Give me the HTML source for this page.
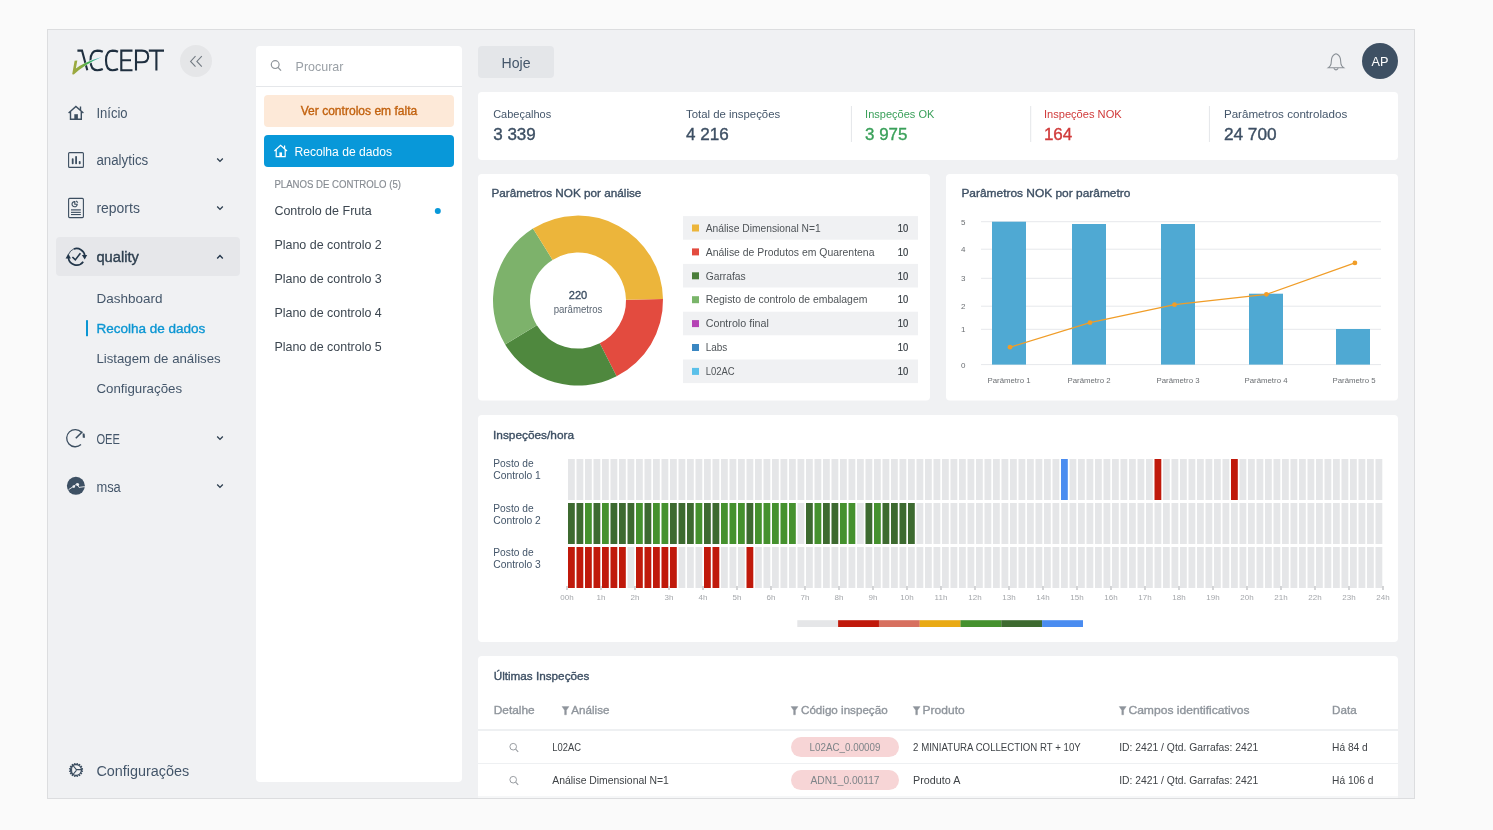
<!DOCTYPE html>
<html><head><meta charset="utf-8"><title>Accept - Recolha de dados</title>
<style>
html,body{margin:0;padding:0;background:#fafafa;width:1493px;height:830px;overflow:hidden}
svg{position:absolute;left:0;top:0;font-family:"Liberation Sans", sans-serif;will-change:transform}
</style></head><body>
<svg width="1493" height="830" viewBox="0 0 1493 830">
<rect x="47.5" y="29.5" width="1367" height="769" fill="#f0f1f3" stroke="#dcdddf" stroke-width="1"/>
<path d="M77.4 50.6 L82 50.6 L87.3 70.3" stroke="#1f2f3f" stroke-width="2.1" fill="none"/>
<path d="M102.8 51.8 Q100.3 50.6 97.3 50.6 Q90.5 50.8 90.5 60.5 Q90.5 70.2 97.3 70.2 Q100.3 70.2 102.8 69" stroke="#1f2f3f" stroke-width="2.1" fill="none"/>
<path d="M118 51.8 Q115.5 50.6 112.5 50.6 Q106 50.8 106 60.5 Q106 70.2 112.5 70.2 Q115.5 70.2 118 69" stroke="#1f2f3f" stroke-width="2.1" fill="none"/>
<path d="M132.5 50.6 L121.3 50.6 L121.3 70.2 L132.5 70.2 M121.3 60.2 L131 60.2" stroke="#1f2f3f" stroke-width="2.1" fill="none"/>
<path d="M136 70.5 L136 50.6 L142 50.6 Q148.2 50.6 148.2 56.4 Q148.2 62.2 142 62.2 L136 62.2" stroke="#1f2f3f" stroke-width="2.1" fill="none"/>
<path d="M148.8 50.6 L164 50.6 M156.4 50.6 L156.4 70.5" stroke="#1f2f3f" stroke-width="2.1" fill="none"/>
<defs><linearGradient id="lg" x1="72" y1="0" x2="102" y2="0" gradientUnits="userSpaceOnUse"><stop offset="0" stop-color="#a0a840"/><stop offset="0.28" stop-color="#8eaa3e"/><stop offset="0.55" stop-color="#3cb050"/><stop offset="1" stop-color="#48b8e8"/></linearGradient></defs>
<path d="M74.2 72.6 Q82 64 101.6 57.2" stroke="#f0f1f3" stroke-width="2.6" fill="none"/>
<path d="M72.2 74.2 L74.6 60.8 L77.3 60.4 L75.9 68.6 Q83 62.6 101.8 57 Q84 64.6 73.8 74.6 Z" stroke="none" stroke-width="1" fill="url(#lg)"/>
<circle cx="196" cy="61" r="16" fill="#e5e6e8" stroke="none" stroke-width="1"/>
<path d="M195.5 56.2 L190.6 61.4 L195.5 66.6 M201.8 56.2 L196.9 61.4 L201.8 66.6" stroke="#737b83" stroke-width="1.1" fill="none"/>
<path d="M68.6 113 L75.9 106.4 L83.4 113 M80.5 106.5 L80.5 110.2 M70.5 111.3 L70.5 119.3 L81.3 119.3 L81.3 111.3" stroke="#3c4e60" stroke-width="1.4" fill="none"/>
<rect x="74.3" y="114.2" width="3.6" height="5.2" fill="#3c4e60"/>
<rect x="68.6" y="152.6" width="14.8" height="14.8" fill="none" rx="1" stroke="#3c4e60" stroke-width="1.1"/>
<rect x="71.8" y="158.2" width="1.8" height="6" fill="#3c4e60" rx="0.8"/>
<rect x="75.2" y="156" width="1.8" height="8.2" fill="#3c4e60" rx="0.8"/>
<rect x="78.8" y="161" width="1.8" height="3.2" fill="#3c4e60" rx="0.8"/>
<rect x="68.6" y="198.4" width="14.8" height="19.2" fill="none" rx="1" stroke="#3c4e60" stroke-width="1.1"/>
<path d="M77.2 204.2 A2.6 2.6 0 1 1 74.8 201.6 L74.8 204.2 Z" stroke="#3c4e60" stroke-width="1.1" fill="none"/>
<path d="M76.2 200.8 L77.8 202.6" stroke="#3c4e60" stroke-width="1.2" fill="none"/>
<rect x="71" y="209.3" width="9.8" height="1.2" fill="#3c4e60"/>
<rect x="71" y="211.8" width="9.8" height="1.1" fill="#3c4e60"/>
<rect x="71" y="214" width="9.8" height="1.1" fill="#3c4e60"/>
<rect x="56" y="237" width="184" height="39" fill="#e6e7ea" rx="4"/>
<path d="M68.71 254.24 A8.3 8.3 0 0 1 73.76 249.00" stroke="#22364a" stroke-width="0.8" fill="none"/>
<path d="M73.76 249.00 A8.3 8.3 0 0 1 84.82 255.64" stroke="#22364a" stroke-width="1.7" fill="none"/>
<path d="M83.23 261.80 A8.3 8.3 0 0 1 68.38 257.96" stroke="#22364a" stroke-width="1.7" fill="none"/>
<path d="M81.9 255 L87.2 255 L84.7 259.6 Z" stroke="none" stroke-width="1" fill="#22364a"/>
<path d="M65.6 258.4 L70.9 258.4 L68.3 253.6 Z" stroke="none" stroke-width="1" fill="#22364a"/>
<path d="M72.4 257 L75.3 259.9 L80.4 253.2" stroke="#22364a" stroke-width="1.6" fill="none"/>
<path d="M81.5 432.2 A8.6 8.6 0 1 0 81 444.6" stroke="#3c4e60" stroke-width="1.3" fill="none"/>
<path d="M75.8 438.2 L82.4 431.8" stroke="#3c4e60" stroke-width="1.6" fill="none"/>
<path d="M82.6 433.2 L84.6 433.8 L85 437.8 L82.8 437.8 Z" stroke="none" stroke-width="1" fill="#3c4e60"/>
<circle cx="75.9" cy="485.8" r="9" fill="#3d5063" stroke="none" stroke-width="1"/>
<path d="M68.6 489.6 L73.6 486.4 L76.8 483.8 L79 487.4 L84.8 486.6" stroke="#f0f1f3" stroke-width="0.9" fill="none"/>
<circle cx="73.8" cy="486.6" r="1.3" fill="#f0f1f3" stroke="none" stroke-width="1"/>
<circle cx="77.6" cy="484.4" r="1.5" fill="#f0f1f3" stroke="none" stroke-width="1"/>
<circle cx="76" cy="770" r="5.5" fill="none" stroke="#3c4e60" stroke-width="1.3"/>
<path d="M81.69 771.13 L82.96 771.39" stroke="#3c4e60" stroke-width="1.5" fill="none"/>
<path d="M80.82 773.22 L81.90 773.94" stroke="#3c4e60" stroke-width="1.5" fill="none"/>
<path d="M79.22 774.82 L79.94 775.90" stroke="#3c4e60" stroke-width="1.5" fill="none"/>
<path d="M77.13 775.69 L77.39 776.96" stroke="#3c4e60" stroke-width="1.5" fill="none"/>
<path d="M74.87 775.69 L74.61 776.96" stroke="#3c4e60" stroke-width="1.5" fill="none"/>
<path d="M72.78 774.82 L72.06 775.90" stroke="#3c4e60" stroke-width="1.5" fill="none"/>
<path d="M71.18 773.22 L70.10 773.94" stroke="#3c4e60" stroke-width="1.5" fill="none"/>
<path d="M70.31 771.13 L69.04 771.39" stroke="#3c4e60" stroke-width="1.5" fill="none"/>
<path d="M70.31 768.87 L69.04 768.61" stroke="#3c4e60" stroke-width="1.5" fill="none"/>
<path d="M71.18 766.78 L70.10 766.06" stroke="#3c4e60" stroke-width="1.5" fill="none"/>
<path d="M72.78 765.18 L72.06 764.10" stroke="#3c4e60" stroke-width="1.5" fill="none"/>
<path d="M74.87 764.31 L74.61 763.04" stroke="#3c4e60" stroke-width="1.5" fill="none"/>
<path d="M77.13 764.31 L77.39 763.04" stroke="#3c4e60" stroke-width="1.5" fill="none"/>
<path d="M79.22 765.18 L79.94 764.10" stroke="#3c4e60" stroke-width="1.5" fill="none"/>
<path d="M80.82 766.78 L81.90 766.06" stroke="#3c4e60" stroke-width="1.5" fill="none"/>
<path d="M81.69 768.87 L82.96 768.61" stroke="#3c4e60" stroke-width="1.5" fill="none"/>
<path d="M72.6 765 Q70.5 770 72.6 775 M72.6 765 L76.4 769.6 L82.6 769.6 M76.4 770.4 L72.6 775" stroke="#3c4e60" stroke-width="1.1" fill="none"/>
<text x="96.4" y="118" font-size="14" fill="#44566a" textLength="31.2" lengthAdjust="spacingAndGlyphs">Início</text>
<text x="96.4" y="165.3" font-size="14" fill="#44566a" textLength="51.8" lengthAdjust="spacingAndGlyphs">analytics</text>
<text x="96.4" y="213.3" font-size="14" fill="#44566a" textLength="43.5" lengthAdjust="spacingAndGlyphs">reports</text>
<text x="96.4" y="261.8" font-size="14" fill="#2f4050" stroke="#2f4050" stroke-width="0.35" textLength="42.5" lengthAdjust="spacingAndGlyphs">quality</text>
<text x="96.4" y="443.8" font-size="14" fill="#44566a" textLength="23.5" lengthAdjust="spacingAndGlyphs">OEE</text>
<text x="96.4" y="491.5" font-size="14" fill="#44566a" textLength="24.4" lengthAdjust="spacingAndGlyphs">msa</text>
<text x="96.4" y="775.8" font-size="14" fill="#44566a" textLength="92.8" lengthAdjust="spacingAndGlyphs">Configurações</text>
<path d="M217.2 158.6 L220 161.39999999999998 L222.8 158.6" stroke="#2c3d4e" stroke-width="1.35" fill="none"/>
<path d="M217.2 206.6 L220 209.39999999999998 L222.8 206.6" stroke="#2c3d4e" stroke-width="1.35" fill="none"/>
<path d="M217.2 484.59999999999997 L220 487.4 L222.8 484.59999999999997" stroke="#2c3d4e" stroke-width="1.35" fill="none"/>
<path d="M217.2 436.59999999999997 L220 439.4 L222.8 436.59999999999997" stroke="#2c3d4e" stroke-width="1.35" fill="none"/>
<path d="M217.2 258.4 L220 255.6 L222.8 258.4" stroke="#22354a" stroke-width="1.4" fill="none"/>
<text x="96.4" y="303.1" font-size="13" fill="#44566a" textLength="66" lengthAdjust="spacingAndGlyphs">Dashboard</text>
<text x="96.4" y="332.9" font-size="13" fill="#0b96d3" stroke="#0b96d3" stroke-width="0.35" textLength="108.9" lengthAdjust="spacingAndGlyphs">Recolha de dados</text>
<rect x="86" y="320.2" width="2" height="16" fill="#0b96d3"/>
<text x="96.4" y="363" font-size="13" fill="#44566a" textLength="124.3" lengthAdjust="spacingAndGlyphs">Listagem de análises</text>
<text x="96.4" y="393" font-size="13" fill="#44566a" textLength="85.7" lengthAdjust="spacingAndGlyphs">Configurações</text>
<rect x="256" y="46" width="206" height="736" fill="#ffffff" rx="4"/>
<circle cx="275.2" cy="64.6" r="3.9" fill="none" stroke="#8f959b" stroke-width="1.2"/>
<path d="M278 67.4 L281 70.6" stroke="#8f959b" stroke-width="1.3" fill="none"/>
<text x="295.6" y="70.8" font-size="13" fill="#9aa0a6" textLength="47.8" lengthAdjust="spacingAndGlyphs">Procurar</text>
<rect x="256" y="86" width="206" height="1" fill="#e5e7ea"/>
<rect x="264" y="95" width="190" height="32" fill="#fde9d8" rx="4"/>
<text x="359" y="114.8" font-size="12" fill="#c2620f" stroke="#c2620f" stroke-width="0.35" text-anchor="middle" textLength="116.6" lengthAdjust="spacingAndGlyphs">Ver controlos em falta</text>
<rect x="264" y="135" width="190" height="32" fill="#0898d9" rx="4"/>
<path d="M274.4 151 L280.6 145.4 L287 151 M284.6 145.4 L284.6 148.6 M276.2 149.8 L276.2 156.6 L285.2 156.6 L285.2 149.8" stroke="#ffffff" stroke-width="1.2" fill="none"/>
<rect x="279.4" y="152.4" width="2.6" height="4.2" fill="#ffffff"/>
<text x="294.4" y="156" font-size="12.5" fill="#ffffff" textLength="97.7" lengthAdjust="spacingAndGlyphs">Recolha de dados</text>
<text x="274.4" y="187.9" font-size="10" fill="#868b92" textLength="126.6" lengthAdjust="spacingAndGlyphs" stroke="#868b92" stroke-width="0.15">PLANOS DE CONTROLO (5)</text>
<text x="274.4" y="215" font-size="13" fill="#3d4751" textLength="97.3" lengthAdjust="spacingAndGlyphs">Controlo de Fruta</text>
<text x="274.4" y="249.2" font-size="13" fill="#3d4751" textLength="107.4" lengthAdjust="spacingAndGlyphs">Plano de controlo 2</text>
<text x="274.4" y="283.2" font-size="13" fill="#3d4751" textLength="107.4" lengthAdjust="spacingAndGlyphs">Plano de controlo 3</text>
<text x="274.4" y="317.2" font-size="13" fill="#3d4751" textLength="107.4" lengthAdjust="spacingAndGlyphs">Plano de controlo 4</text>
<text x="274.4" y="351.2" font-size="13" fill="#3d4751" textLength="107.4" lengthAdjust="spacingAndGlyphs">Plano de controlo 5</text>
<circle cx="437.8" cy="211" r="3" fill="#0898d9" stroke="none" stroke-width="1"/>
<rect x="478" y="46" width="76" height="32" fill="#e4e6e9" rx="4"/>
<text x="516" y="67.9" font-size="14" fill="#44566a" text-anchor="middle" textLength="29" lengthAdjust="spacingAndGlyphs">Hoje</text>
<path d="M1336 53.8 Q1339.6 55 1340.4 58.8 L1341 64.2 Q1341.4 66.4 1343.6 67.8 L1328.4 67.8 Q1330.6 66.4 1331 64.2 L1331.6 58.8 Q1332.4 55 1336 53.8 Z" stroke="#8a9096" stroke-width="1.1" fill="none"/>
<path d="M1333.8 68.2 Q1336 71.6 1338.2 68.2" stroke="#8a9096" stroke-width="1.1" fill="none"/>
<circle cx="1380" cy="61" r="18" fill="#3e5063" stroke="none" stroke-width="1"/>
<text x="1380" y="66" font-size="13.5" fill="#ffffff" text-anchor="middle" textLength="16.9" lengthAdjust="spacingAndGlyphs">AP</text>
<rect x="478" y="92" width="920" height="68" fill="#ffffff" rx="4"/>
<text x="493.2" y="117.9" font-size="11.5" fill="#44566a" textLength="58" lengthAdjust="spacingAndGlyphs">Cabeçalhos</text>
<text x="493.2" y="140.3" font-size="16" fill="#3d4f63" stroke="#3d4f63" stroke-width="0.35" textLength="42.6" lengthAdjust="spacingAndGlyphs">3 339</text>
<text x="686" y="117.9" font-size="11.5" fill="#44566a" textLength="94.2" lengthAdjust="spacingAndGlyphs">Total de inspeções</text>
<text x="686" y="140.3" font-size="16" fill="#3d4f63" stroke="#3d4f63" stroke-width="0.35" textLength="42.7" lengthAdjust="spacingAndGlyphs">4 216</text>
<text x="865.1" y="117.9" font-size="11.5" fill="#3aa05a" textLength="69.2" lengthAdjust="spacingAndGlyphs">Inspeções OK</text>
<text x="865.1" y="140.3" font-size="16" fill="#3aa05a" stroke="#3aa05a" stroke-width="0.35" textLength="42.3" lengthAdjust="spacingAndGlyphs">3 975</text>
<text x="1043.9" y="117.9" font-size="11.5" fill="#d03a3a" textLength="77.8" lengthAdjust="spacingAndGlyphs">Inspeções NOK</text>
<text x="1043.9" y="140.3" font-size="16" fill="#d03a3a" stroke="#d03a3a" stroke-width="0.35" textLength="28.4" lengthAdjust="spacingAndGlyphs">164</text>
<text x="1223.9" y="117.9" font-size="11.5" fill="#44566a" textLength="123.3" lengthAdjust="spacingAndGlyphs">Parâmetros controlados</text>
<text x="1223.9" y="140.3" font-size="16" fill="#3d4f63" stroke="#3d4f63" stroke-width="0.35" textLength="52.7" lengthAdjust="spacingAndGlyphs">24 700</text>
<rect x="850.9" y="106" width="1" height="36" fill="#e4e6e9"/>
<rect x="1030.2" y="106" width="1" height="36" fill="#e4e6e9"/>
<rect x="1208.9" y="106" width="1" height="36" fill="#e4e6e9"/>
<rect x="478" y="174" width="452" height="226.5" fill="#ffffff" rx="4"/>
<text x="491.4" y="197" font-size="11.5" fill="#3d4f63" stroke="#3d4f63" stroke-width="0.35" textLength="150" lengthAdjust="spacingAndGlyphs">Parâmetros NOK por análise</text>
<path d="M662.99 299.12 A85 85 0 0 1 616.59 376.34 L599.79 343.37 A48 48 0 0 0 625.99 299.76 Z" stroke="none" stroke-width="1" fill="#e34b3f"/>
<path d="M616.59 376.34 A85 85 0 0 1 505.14 344.38 L536.86 325.32 A48 48 0 0 0 599.79 343.37 Z" stroke="none" stroke-width="1" fill="#4f883e"/>
<path d="M505.14 344.38 A85 85 0 0 1 532.96 228.52 L552.56 259.89 A48 48 0 0 0 536.86 325.32 Z" stroke="none" stroke-width="1" fill="#7db26b"/>
<path d="M532.96 228.52 A85 85 0 0 1 662.99 299.12 L625.99 299.76 A48 48 0 0 0 552.56 259.89 Z" stroke="none" stroke-width="1" fill="#ecb53b"/>
<text x="578" y="299.4" font-size="11.5" fill="#3d4f63" stroke="#3d4f63" stroke-width="0.35" text-anchor="middle" textLength="18.5" lengthAdjust="spacingAndGlyphs">220</text>
<text x="578" y="313" font-size="10" fill="#5b6673" text-anchor="middle" textLength="48.7" lengthAdjust="spacingAndGlyphs">parâmetros</text>
<rect x="683" y="216.1" width="235" height="23.6" fill="#f0f1f3"/>
<rect x="692" y="224.5" width="7" height="7" fill="#ecb53b"/>
<text x="705.7" y="231.7" font-size="11" fill="#4f5458" textLength="115" lengthAdjust="spacingAndGlyphs">Análise Dimensional N=1</text>
<text x="908.3" y="231.7" font-size="11" fill="#333a40" text-anchor="end" textLength="10.5" lengthAdjust="spacingAndGlyphs" stroke="#333a40" stroke-width="0.2">10</text>
<rect x="692" y="248.4" width="7" height="7" fill="#e34b3f"/>
<text x="705.7" y="255.6" font-size="11" fill="#4f5458" textLength="168.8" lengthAdjust="spacingAndGlyphs">Análise de Produtos em Quarentena</text>
<text x="908.3" y="255.6" font-size="11" fill="#333a40" text-anchor="end" textLength="10.5" lengthAdjust="spacingAndGlyphs" stroke="#333a40" stroke-width="0.2">10</text>
<rect x="683" y="263.9" width="235" height="23.6" fill="#f0f1f3"/>
<rect x="692" y="272.29999999999995" width="7" height="7" fill="#4a7e3a"/>
<text x="705.7" y="279.5" font-size="11" fill="#4f5458" textLength="40" lengthAdjust="spacingAndGlyphs">Garrafas</text>
<text x="908.3" y="279.5" font-size="11" fill="#333a40" text-anchor="end" textLength="10.5" lengthAdjust="spacingAndGlyphs" stroke="#333a40" stroke-width="0.2">10</text>
<rect x="692" y="296.19999999999993" width="7" height="7" fill="#7ab56a"/>
<text x="705.7" y="303.4" font-size="11" fill="#4f5458" textLength="161.7" lengthAdjust="spacingAndGlyphs">Registo de controlo de embalagem</text>
<text x="908.3" y="303.4" font-size="11" fill="#333a40" text-anchor="end" textLength="10.5" lengthAdjust="spacingAndGlyphs" stroke="#333a40" stroke-width="0.2">10</text>
<rect x="683" y="311.7" width="235" height="23.6" fill="#f0f1f3"/>
<rect x="692" y="320.09999999999997" width="7" height="7" fill="#b543b5"/>
<text x="705.7" y="327.3" font-size="11" fill="#4f5458" textLength="63.2" lengthAdjust="spacingAndGlyphs">Controlo final</text>
<text x="908.3" y="327.3" font-size="11" fill="#333a40" text-anchor="end" textLength="10.5" lengthAdjust="spacingAndGlyphs" stroke="#333a40" stroke-width="0.2">10</text>
<rect x="692" y="344.0" width="7" height="7" fill="#3a87c2"/>
<text x="705.7" y="351.20000000000005" font-size="11" fill="#4f5458" textLength="21.6" lengthAdjust="spacingAndGlyphs">Labs</text>
<text x="908.3" y="351.20000000000005" font-size="11" fill="#333a40" text-anchor="end" textLength="10.5" lengthAdjust="spacingAndGlyphs" stroke="#333a40" stroke-width="0.2">10</text>
<rect x="683" y="359.5" width="235" height="23.6" fill="#f0f1f3"/>
<rect x="692" y="367.9" width="7" height="7" fill="#5bc0e9"/>
<text x="705.7" y="375.1" font-size="11" fill="#4f5458" textLength="29" lengthAdjust="spacingAndGlyphs">L02AC</text>
<text x="908.3" y="375.1" font-size="11" fill="#333a40" text-anchor="end" textLength="10.5" lengthAdjust="spacingAndGlyphs" stroke="#333a40" stroke-width="0.2">10</text>
<rect x="946" y="174" width="452" height="226.5" fill="#ffffff" rx="4"/>
<text x="961.4" y="197" font-size="11.5" fill="#3d4f63" stroke="#3d4f63" stroke-width="0.35" textLength="169" lengthAdjust="spacingAndGlyphs">Parâmetros NOK por parâmetro</text>
<rect x="981" y="221.2" width="400" height="1" fill="#e6e8eb"/>
<text x="963.2" y="224.7" font-size="8" fill="#6b6f73" text-anchor="middle">5</text>
<rect x="981" y="248.7" width="400" height="1" fill="#e6e8eb"/>
<text x="963.2" y="252.2" font-size="8" fill="#6b6f73" text-anchor="middle">4</text>
<rect x="981" y="277.8" width="400" height="1" fill="#e6e8eb"/>
<text x="963.2" y="281.3" font-size="8" fill="#6b6f73" text-anchor="middle">3</text>
<rect x="981" y="305.7" width="400" height="1" fill="#e6e8eb"/>
<text x="963.2" y="309.2" font-size="8" fill="#6b6f73" text-anchor="middle">2</text>
<rect x="981" y="328.8" width="400" height="1" fill="#e6e8eb"/>
<text x="963.2" y="332.3" font-size="8" fill="#6b6f73" text-anchor="middle">1</text>
<rect x="981" y="364.1" width="400" height="1" fill="#e6e8eb"/>
<text x="963.2" y="367.6" font-size="8" fill="#6b6f73" text-anchor="middle">0</text>
<rect x="992" y="221.7" width="34" height="142.90000000000003" fill="#4fa9d3"/>
<rect x="1072" y="224" width="34" height="140.60000000000002" fill="#4fa9d3"/>
<rect x="1161" y="224" width="34" height="140.60000000000002" fill="#4fa9d3"/>
<rect x="1249" y="293.7" width="34" height="70.90000000000003" fill="#4fa9d3"/>
<rect x="1336" y="329" width="34" height="35.60000000000002" fill="#4fa9d3"/>
<path d="M1010 347.2 L1090 322.7 L1174.5 304.7 L1266.4 294.3 L1354.9 262.9" stroke="#f09d28" stroke-width="1.2" fill="none"/>
<circle cx="1010" cy="347.2" r="2.4" fill="#f09d28" stroke="none" stroke-width="1"/>
<circle cx="1090" cy="322.7" r="2.4" fill="#f09d28" stroke="none" stroke-width="1"/>
<circle cx="1174.5" cy="304.7" r="2.4" fill="#f09d28" stroke="none" stroke-width="1"/>
<circle cx="1266.4" cy="294.3" r="2.4" fill="#f09d28" stroke="none" stroke-width="1"/>
<circle cx="1354.9" cy="262.9" r="2.4" fill="#f09d28" stroke="none" stroke-width="1"/>
<text x="1009" y="383.2" font-size="8" fill="#6b6f73" text-anchor="middle" textLength="43" lengthAdjust="spacingAndGlyphs">Parâmetro 1</text>
<text x="1089" y="383.2" font-size="8" fill="#6b6f73" text-anchor="middle" textLength="43" lengthAdjust="spacingAndGlyphs">Parâmetro 2</text>
<text x="1178" y="383.2" font-size="8" fill="#6b6f73" text-anchor="middle" textLength="43" lengthAdjust="spacingAndGlyphs">Parâmetro 3</text>
<text x="1266" y="383.2" font-size="8" fill="#6b6f73" text-anchor="middle" textLength="43" lengthAdjust="spacingAndGlyphs">Parâmetro 4</text>
<text x="1354" y="383.2" font-size="8" fill="#6b6f73" text-anchor="middle" textLength="43" lengthAdjust="spacingAndGlyphs">Parâmetro 5</text>
<rect x="478" y="415" width="920" height="227" fill="#ffffff" rx="4"/>
<text x="493" y="439" font-size="11.5" fill="#3d4f63" stroke="#3d4f63" stroke-width="0.35" textLength="81" lengthAdjust="spacingAndGlyphs">Inspeções/hora</text>
<text x="493.3" y="467.2" font-size="11" fill="#44566a" textLength="40.3" lengthAdjust="spacingAndGlyphs">Posto de</text>
<text x="493.3" y="478.9" font-size="11" fill="#44566a" textLength="47.5" lengthAdjust="spacingAndGlyphs">Controlo 1</text>
<text x="493.3" y="512.1" font-size="11" fill="#44566a" textLength="40.3" lengthAdjust="spacingAndGlyphs">Posto de</text>
<text x="493.3" y="524" font-size="11" fill="#44566a" textLength="47.5" lengthAdjust="spacingAndGlyphs">Controlo 2</text>
<text x="493.3" y="556.3" font-size="11" fill="#44566a" textLength="40.3" lengthAdjust="spacingAndGlyphs">Posto de</text>
<text x="493.3" y="568" font-size="11" fill="#44566a" textLength="47.5" lengthAdjust="spacingAndGlyphs">Controlo 3</text>
<rect x="568.00" y="459" width="6.8" height="41" fill="#e5e6e8"/>
<rect x="576.50" y="459" width="6.8" height="41" fill="#e5e6e8"/>
<rect x="585.00" y="459" width="6.8" height="41" fill="#e5e6e8"/>
<rect x="593.50" y="459" width="6.8" height="41" fill="#e5e6e8"/>
<rect x="602.00" y="459" width="6.8" height="41" fill="#e5e6e8"/>
<rect x="610.50" y="459" width="6.8" height="41" fill="#e5e6e8"/>
<rect x="619.00" y="459" width="6.8" height="41" fill="#e5e6e8"/>
<rect x="627.50" y="459" width="6.8" height="41" fill="#e5e6e8"/>
<rect x="636.00" y="459" width="6.8" height="41" fill="#e5e6e8"/>
<rect x="644.50" y="459" width="6.8" height="41" fill="#e5e6e8"/>
<rect x="653.00" y="459" width="6.8" height="41" fill="#e5e6e8"/>
<rect x="661.50" y="459" width="6.8" height="41" fill="#e5e6e8"/>
<rect x="670.00" y="459" width="6.8" height="41" fill="#e5e6e8"/>
<rect x="678.50" y="459" width="6.8" height="41" fill="#e5e6e8"/>
<rect x="687.00" y="459" width="6.8" height="41" fill="#e5e6e8"/>
<rect x="695.50" y="459" width="6.8" height="41" fill="#e5e6e8"/>
<rect x="704.00" y="459" width="6.8" height="41" fill="#e5e6e8"/>
<rect x="712.50" y="459" width="6.8" height="41" fill="#e5e6e8"/>
<rect x="721.00" y="459" width="6.8" height="41" fill="#e5e6e8"/>
<rect x="729.50" y="459" width="6.8" height="41" fill="#e5e6e8"/>
<rect x="738.00" y="459" width="6.8" height="41" fill="#e5e6e8"/>
<rect x="746.50" y="459" width="6.8" height="41" fill="#e5e6e8"/>
<rect x="755.00" y="459" width="6.8" height="41" fill="#e5e6e8"/>
<rect x="763.50" y="459" width="6.8" height="41" fill="#e5e6e8"/>
<rect x="772.00" y="459" width="6.8" height="41" fill="#e5e6e8"/>
<rect x="780.50" y="459" width="6.8" height="41" fill="#e5e6e8"/>
<rect x="789.00" y="459" width="6.8" height="41" fill="#e5e6e8"/>
<rect x="797.50" y="459" width="6.8" height="41" fill="#e5e6e8"/>
<rect x="806.00" y="459" width="6.8" height="41" fill="#e5e6e8"/>
<rect x="814.50" y="459" width="6.8" height="41" fill="#e5e6e8"/>
<rect x="823.00" y="459" width="6.8" height="41" fill="#e5e6e8"/>
<rect x="831.50" y="459" width="6.8" height="41" fill="#e5e6e8"/>
<rect x="840.00" y="459" width="6.8" height="41" fill="#e5e6e8"/>
<rect x="848.50" y="459" width="6.8" height="41" fill="#e5e6e8"/>
<rect x="857.00" y="459" width="6.8" height="41" fill="#e5e6e8"/>
<rect x="865.50" y="459" width="6.8" height="41" fill="#e5e6e8"/>
<rect x="874.00" y="459" width="6.8" height="41" fill="#e5e6e8"/>
<rect x="882.50" y="459" width="6.8" height="41" fill="#e5e6e8"/>
<rect x="891.00" y="459" width="6.8" height="41" fill="#e5e6e8"/>
<rect x="899.50" y="459" width="6.8" height="41" fill="#e5e6e8"/>
<rect x="908.00" y="459" width="6.8" height="41" fill="#e5e6e8"/>
<rect x="916.50" y="459" width="6.8" height="41" fill="#e5e6e8"/>
<rect x="925.00" y="459" width="6.8" height="41" fill="#e5e6e8"/>
<rect x="933.50" y="459" width="6.8" height="41" fill="#e5e6e8"/>
<rect x="942.00" y="459" width="6.8" height="41" fill="#e5e6e8"/>
<rect x="950.50" y="459" width="6.8" height="41" fill="#e5e6e8"/>
<rect x="959.00" y="459" width="6.8" height="41" fill="#e5e6e8"/>
<rect x="967.50" y="459" width="6.8" height="41" fill="#e5e6e8"/>
<rect x="976.00" y="459" width="6.8" height="41" fill="#e5e6e8"/>
<rect x="984.50" y="459" width="6.8" height="41" fill="#e5e6e8"/>
<rect x="993.00" y="459" width="6.8" height="41" fill="#e5e6e8"/>
<rect x="1001.50" y="459" width="6.8" height="41" fill="#e5e6e8"/>
<rect x="1010.00" y="459" width="6.8" height="41" fill="#e5e6e8"/>
<rect x="1018.50" y="459" width="6.8" height="41" fill="#e5e6e8"/>
<rect x="1027.00" y="459" width="6.8" height="41" fill="#e5e6e8"/>
<rect x="1035.50" y="459" width="6.8" height="41" fill="#e5e6e8"/>
<rect x="1044.00" y="459" width="6.8" height="41" fill="#e5e6e8"/>
<rect x="1052.50" y="459" width="6.8" height="41" fill="#e5e6e8"/>
<rect x="1061.00" y="459" width="6.8" height="41" fill="#4a8cf0"/>
<rect x="1069.50" y="459" width="6.8" height="41" fill="#e5e6e8"/>
<rect x="1078.00" y="459" width="6.8" height="41" fill="#e5e6e8"/>
<rect x="1086.50" y="459" width="6.8" height="41" fill="#e5e6e8"/>
<rect x="1095.00" y="459" width="6.8" height="41" fill="#e5e6e8"/>
<rect x="1103.50" y="459" width="6.8" height="41" fill="#e5e6e8"/>
<rect x="1112.00" y="459" width="6.8" height="41" fill="#e5e6e8"/>
<rect x="1120.50" y="459" width="6.8" height="41" fill="#e5e6e8"/>
<rect x="1129.00" y="459" width="6.8" height="41" fill="#e5e6e8"/>
<rect x="1137.50" y="459" width="6.8" height="41" fill="#e5e6e8"/>
<rect x="1146.00" y="459" width="6.8" height="41" fill="#e5e6e8"/>
<rect x="1154.50" y="459" width="6.8" height="41" fill="#c0190b"/>
<rect x="1163.00" y="459" width="6.8" height="41" fill="#e5e6e8"/>
<rect x="1171.50" y="459" width="6.8" height="41" fill="#e5e6e8"/>
<rect x="1180.00" y="459" width="6.8" height="41" fill="#e5e6e8"/>
<rect x="1188.50" y="459" width="6.8" height="41" fill="#e5e6e8"/>
<rect x="1197.00" y="459" width="6.8" height="41" fill="#e5e6e8"/>
<rect x="1205.50" y="459" width="6.8" height="41" fill="#e5e6e8"/>
<rect x="1214.00" y="459" width="6.8" height="41" fill="#e5e6e8"/>
<rect x="1222.50" y="459" width="6.8" height="41" fill="#e5e6e8"/>
<rect x="1231.00" y="459" width="6.8" height="41" fill="#c0190b"/>
<rect x="1239.50" y="459" width="6.8" height="41" fill="#e5e6e8"/>
<rect x="1248.00" y="459" width="6.8" height="41" fill="#e5e6e8"/>
<rect x="1256.50" y="459" width="6.8" height="41" fill="#e5e6e8"/>
<rect x="1265.00" y="459" width="6.8" height="41" fill="#e5e6e8"/>
<rect x="1273.50" y="459" width="6.8" height="41" fill="#e5e6e8"/>
<rect x="1282.00" y="459" width="6.8" height="41" fill="#e5e6e8"/>
<rect x="1290.50" y="459" width="6.8" height="41" fill="#e5e6e8"/>
<rect x="1299.00" y="459" width="6.8" height="41" fill="#e5e6e8"/>
<rect x="1307.50" y="459" width="6.8" height="41" fill="#e5e6e8"/>
<rect x="1316.00" y="459" width="6.8" height="41" fill="#e5e6e8"/>
<rect x="1324.50" y="459" width="6.8" height="41" fill="#e5e6e8"/>
<rect x="1333.00" y="459" width="6.8" height="41" fill="#e5e6e8"/>
<rect x="1341.50" y="459" width="6.8" height="41" fill="#e5e6e8"/>
<rect x="1350.00" y="459" width="6.8" height="41" fill="#e5e6e8"/>
<rect x="1358.50" y="459" width="6.8" height="41" fill="#e5e6e8"/>
<rect x="1367.00" y="459" width="6.8" height="41" fill="#e5e6e8"/>
<rect x="1375.50" y="459" width="6.8" height="41" fill="#e5e6e8"/>
<rect x="568.00" y="503" width="6.8" height="41" fill="#3d6a30"/>
<rect x="576.50" y="503" width="6.8" height="41" fill="#3d6a30"/>
<rect x="585.00" y="503" width="6.8" height="41" fill="#45912e"/>
<rect x="593.50" y="503" width="6.8" height="41" fill="#3d6a30"/>
<rect x="602.00" y="503" width="6.8" height="41" fill="#45912e"/>
<rect x="610.50" y="503" width="6.8" height="41" fill="#3d6a30"/>
<rect x="619.00" y="503" width="6.8" height="41" fill="#3d6a30"/>
<rect x="627.50" y="503" width="6.8" height="41" fill="#3d6a30"/>
<rect x="636.00" y="503" width="6.8" height="41" fill="#45912e"/>
<rect x="644.50" y="503" width="6.8" height="41" fill="#3d6a30"/>
<rect x="653.00" y="503" width="6.8" height="41" fill="#45912e"/>
<rect x="661.50" y="503" width="6.8" height="41" fill="#45912e"/>
<rect x="670.00" y="503" width="6.8" height="41" fill="#3d6a30"/>
<rect x="678.50" y="503" width="6.8" height="41" fill="#3d6a30"/>
<rect x="687.00" y="503" width="6.8" height="41" fill="#3d6a30"/>
<rect x="695.50" y="503" width="6.8" height="41" fill="#45912e"/>
<rect x="704.00" y="503" width="6.8" height="41" fill="#3d6a30"/>
<rect x="712.50" y="503" width="6.8" height="41" fill="#3d6a30"/>
<rect x="721.00" y="503" width="6.8" height="41" fill="#45912e"/>
<rect x="729.50" y="503" width="6.8" height="41" fill="#45912e"/>
<rect x="738.00" y="503" width="6.8" height="41" fill="#45912e"/>
<rect x="746.50" y="503" width="6.8" height="41" fill="#3d6a30"/>
<rect x="755.00" y="503" width="6.8" height="41" fill="#45912e"/>
<rect x="763.50" y="503" width="6.8" height="41" fill="#45912e"/>
<rect x="772.00" y="503" width="6.8" height="41" fill="#45912e"/>
<rect x="780.50" y="503" width="6.8" height="41" fill="#45912e"/>
<rect x="789.00" y="503" width="6.8" height="41" fill="#45912e"/>
<rect x="797.50" y="503" width="6.8" height="41" fill="#e5e6e8"/>
<rect x="806.00" y="503" width="6.8" height="41" fill="#3d6a30"/>
<rect x="814.50" y="503" width="6.8" height="41" fill="#45912e"/>
<rect x="823.00" y="503" width="6.8" height="41" fill="#3d6a30"/>
<rect x="831.50" y="503" width="6.8" height="41" fill="#3d6a30"/>
<rect x="840.00" y="503" width="6.8" height="41" fill="#45912e"/>
<rect x="848.50" y="503" width="6.8" height="41" fill="#45912e"/>
<rect x="857.00" y="503" width="6.8" height="41" fill="#e5e6e8"/>
<rect x="865.50" y="503" width="6.8" height="41" fill="#3d6a30"/>
<rect x="874.00" y="503" width="6.8" height="41" fill="#45912e"/>
<rect x="882.50" y="503" width="6.8" height="41" fill="#3d6a30"/>
<rect x="891.00" y="503" width="6.8" height="41" fill="#3d6a30"/>
<rect x="899.50" y="503" width="6.8" height="41" fill="#3d6a30"/>
<rect x="908.00" y="503" width="6.8" height="41" fill="#3d6a30"/>
<rect x="916.50" y="503" width="6.8" height="41" fill="#e5e6e8"/>
<rect x="925.00" y="503" width="6.8" height="41" fill="#e5e6e8"/>
<rect x="933.50" y="503" width="6.8" height="41" fill="#e5e6e8"/>
<rect x="942.00" y="503" width="6.8" height="41" fill="#e5e6e8"/>
<rect x="950.50" y="503" width="6.8" height="41" fill="#e5e6e8"/>
<rect x="959.00" y="503" width="6.8" height="41" fill="#e5e6e8"/>
<rect x="967.50" y="503" width="6.8" height="41" fill="#e5e6e8"/>
<rect x="976.00" y="503" width="6.8" height="41" fill="#e5e6e8"/>
<rect x="984.50" y="503" width="6.8" height="41" fill="#e5e6e8"/>
<rect x="993.00" y="503" width="6.8" height="41" fill="#e5e6e8"/>
<rect x="1001.50" y="503" width="6.8" height="41" fill="#e5e6e8"/>
<rect x="1010.00" y="503" width="6.8" height="41" fill="#e5e6e8"/>
<rect x="1018.50" y="503" width="6.8" height="41" fill="#e5e6e8"/>
<rect x="1027.00" y="503" width="6.8" height="41" fill="#e5e6e8"/>
<rect x="1035.50" y="503" width="6.8" height="41" fill="#e5e6e8"/>
<rect x="1044.00" y="503" width="6.8" height="41" fill="#e5e6e8"/>
<rect x="1052.50" y="503" width="6.8" height="41" fill="#e5e6e8"/>
<rect x="1061.00" y="503" width="6.8" height="41" fill="#e5e6e8"/>
<rect x="1069.50" y="503" width="6.8" height="41" fill="#e5e6e8"/>
<rect x="1078.00" y="503" width="6.8" height="41" fill="#e5e6e8"/>
<rect x="1086.50" y="503" width="6.8" height="41" fill="#e5e6e8"/>
<rect x="1095.00" y="503" width="6.8" height="41" fill="#e5e6e8"/>
<rect x="1103.50" y="503" width="6.8" height="41" fill="#e5e6e8"/>
<rect x="1112.00" y="503" width="6.8" height="41" fill="#e5e6e8"/>
<rect x="1120.50" y="503" width="6.8" height="41" fill="#e5e6e8"/>
<rect x="1129.00" y="503" width="6.8" height="41" fill="#e5e6e8"/>
<rect x="1137.50" y="503" width="6.8" height="41" fill="#e5e6e8"/>
<rect x="1146.00" y="503" width="6.8" height="41" fill="#e5e6e8"/>
<rect x="1154.50" y="503" width="6.8" height="41" fill="#e5e6e8"/>
<rect x="1163.00" y="503" width="6.8" height="41" fill="#e5e6e8"/>
<rect x="1171.50" y="503" width="6.8" height="41" fill="#e5e6e8"/>
<rect x="1180.00" y="503" width="6.8" height="41" fill="#e5e6e8"/>
<rect x="1188.50" y="503" width="6.8" height="41" fill="#e5e6e8"/>
<rect x="1197.00" y="503" width="6.8" height="41" fill="#e5e6e8"/>
<rect x="1205.50" y="503" width="6.8" height="41" fill="#e5e6e8"/>
<rect x="1214.00" y="503" width="6.8" height="41" fill="#e5e6e8"/>
<rect x="1222.50" y="503" width="6.8" height="41" fill="#e5e6e8"/>
<rect x="1231.00" y="503" width="6.8" height="41" fill="#e5e6e8"/>
<rect x="1239.50" y="503" width="6.8" height="41" fill="#e5e6e8"/>
<rect x="1248.00" y="503" width="6.8" height="41" fill="#e5e6e8"/>
<rect x="1256.50" y="503" width="6.8" height="41" fill="#e5e6e8"/>
<rect x="1265.00" y="503" width="6.8" height="41" fill="#e5e6e8"/>
<rect x="1273.50" y="503" width="6.8" height="41" fill="#e5e6e8"/>
<rect x="1282.00" y="503" width="6.8" height="41" fill="#e5e6e8"/>
<rect x="1290.50" y="503" width="6.8" height="41" fill="#e5e6e8"/>
<rect x="1299.00" y="503" width="6.8" height="41" fill="#e5e6e8"/>
<rect x="1307.50" y="503" width="6.8" height="41" fill="#e5e6e8"/>
<rect x="1316.00" y="503" width="6.8" height="41" fill="#e5e6e8"/>
<rect x="1324.50" y="503" width="6.8" height="41" fill="#e5e6e8"/>
<rect x="1333.00" y="503" width="6.8" height="41" fill="#e5e6e8"/>
<rect x="1341.50" y="503" width="6.8" height="41" fill="#e5e6e8"/>
<rect x="1350.00" y="503" width="6.8" height="41" fill="#e5e6e8"/>
<rect x="1358.50" y="503" width="6.8" height="41" fill="#e5e6e8"/>
<rect x="1367.00" y="503" width="6.8" height="41" fill="#e5e6e8"/>
<rect x="1375.50" y="503" width="6.8" height="41" fill="#e5e6e8"/>
<rect x="568.00" y="547" width="6.8" height="41" fill="#c0190b"/>
<rect x="576.50" y="547" width="6.8" height="41" fill="#c0190b"/>
<rect x="585.00" y="547" width="6.8" height="41" fill="#c0190b"/>
<rect x="593.50" y="547" width="6.8" height="41" fill="#c0190b"/>
<rect x="602.00" y="547" width="6.8" height="41" fill="#c0190b"/>
<rect x="610.50" y="547" width="6.8" height="41" fill="#c0190b"/>
<rect x="619.00" y="547" width="6.8" height="41" fill="#c0190b"/>
<rect x="627.50" y="547" width="6.8" height="41" fill="#e5e6e8"/>
<rect x="636.00" y="547" width="6.8" height="41" fill="#c0190b"/>
<rect x="644.50" y="547" width="6.8" height="41" fill="#c0190b"/>
<rect x="653.00" y="547" width="6.8" height="41" fill="#c0190b"/>
<rect x="661.50" y="547" width="6.8" height="41" fill="#c0190b"/>
<rect x="670.00" y="547" width="6.8" height="41" fill="#c0190b"/>
<rect x="678.50" y="547" width="6.8" height="41" fill="#e5e6e8"/>
<rect x="687.00" y="547" width="6.8" height="41" fill="#e5e6e8"/>
<rect x="695.50" y="547" width="6.8" height="41" fill="#e5e6e8"/>
<rect x="704.00" y="547" width="6.8" height="41" fill="#c0190b"/>
<rect x="712.50" y="547" width="6.8" height="41" fill="#c0190b"/>
<rect x="721.00" y="547" width="6.8" height="41" fill="#e5e6e8"/>
<rect x="729.50" y="547" width="6.8" height="41" fill="#e5e6e8"/>
<rect x="738.00" y="547" width="6.8" height="41" fill="#e5e6e8"/>
<rect x="746.50" y="547" width="6.8" height="41" fill="#c0190b"/>
<rect x="755.00" y="547" width="6.8" height="41" fill="#e5e6e8"/>
<rect x="763.50" y="547" width="6.8" height="41" fill="#e5e6e8"/>
<rect x="772.00" y="547" width="6.8" height="41" fill="#e5e6e8"/>
<rect x="780.50" y="547" width="6.8" height="41" fill="#e5e6e8"/>
<rect x="789.00" y="547" width="6.8" height="41" fill="#e5e6e8"/>
<rect x="797.50" y="547" width="6.8" height="41" fill="#e5e6e8"/>
<rect x="806.00" y="547" width="6.8" height="41" fill="#e5e6e8"/>
<rect x="814.50" y="547" width="6.8" height="41" fill="#e5e6e8"/>
<rect x="823.00" y="547" width="6.8" height="41" fill="#e5e6e8"/>
<rect x="831.50" y="547" width="6.8" height="41" fill="#e5e6e8"/>
<rect x="840.00" y="547" width="6.8" height="41" fill="#e5e6e8"/>
<rect x="848.50" y="547" width="6.8" height="41" fill="#e5e6e8"/>
<rect x="857.00" y="547" width="6.8" height="41" fill="#e5e6e8"/>
<rect x="865.50" y="547" width="6.8" height="41" fill="#e5e6e8"/>
<rect x="874.00" y="547" width="6.8" height="41" fill="#e5e6e8"/>
<rect x="882.50" y="547" width="6.8" height="41" fill="#e5e6e8"/>
<rect x="891.00" y="547" width="6.8" height="41" fill="#e5e6e8"/>
<rect x="899.50" y="547" width="6.8" height="41" fill="#e5e6e8"/>
<rect x="908.00" y="547" width="6.8" height="41" fill="#e5e6e8"/>
<rect x="916.50" y="547" width="6.8" height="41" fill="#e5e6e8"/>
<rect x="925.00" y="547" width="6.8" height="41" fill="#e5e6e8"/>
<rect x="933.50" y="547" width="6.8" height="41" fill="#e5e6e8"/>
<rect x="942.00" y="547" width="6.8" height="41" fill="#e5e6e8"/>
<rect x="950.50" y="547" width="6.8" height="41" fill="#e5e6e8"/>
<rect x="959.00" y="547" width="6.8" height="41" fill="#e5e6e8"/>
<rect x="967.50" y="547" width="6.8" height="41" fill="#e5e6e8"/>
<rect x="976.00" y="547" width="6.8" height="41" fill="#e5e6e8"/>
<rect x="984.50" y="547" width="6.8" height="41" fill="#e5e6e8"/>
<rect x="993.00" y="547" width="6.8" height="41" fill="#e5e6e8"/>
<rect x="1001.50" y="547" width="6.8" height="41" fill="#e5e6e8"/>
<rect x="1010.00" y="547" width="6.8" height="41" fill="#e5e6e8"/>
<rect x="1018.50" y="547" width="6.8" height="41" fill="#e5e6e8"/>
<rect x="1027.00" y="547" width="6.8" height="41" fill="#e5e6e8"/>
<rect x="1035.50" y="547" width="6.8" height="41" fill="#e5e6e8"/>
<rect x="1044.00" y="547" width="6.8" height="41" fill="#e5e6e8"/>
<rect x="1052.50" y="547" width="6.8" height="41" fill="#e5e6e8"/>
<rect x="1061.00" y="547" width="6.8" height="41" fill="#e5e6e8"/>
<rect x="1069.50" y="547" width="6.8" height="41" fill="#e5e6e8"/>
<rect x="1078.00" y="547" width="6.8" height="41" fill="#e5e6e8"/>
<rect x="1086.50" y="547" width="6.8" height="41" fill="#e5e6e8"/>
<rect x="1095.00" y="547" width="6.8" height="41" fill="#e5e6e8"/>
<rect x="1103.50" y="547" width="6.8" height="41" fill="#e5e6e8"/>
<rect x="1112.00" y="547" width="6.8" height="41" fill="#e5e6e8"/>
<rect x="1120.50" y="547" width="6.8" height="41" fill="#e5e6e8"/>
<rect x="1129.00" y="547" width="6.8" height="41" fill="#e5e6e8"/>
<rect x="1137.50" y="547" width="6.8" height="41" fill="#e5e6e8"/>
<rect x="1146.00" y="547" width="6.8" height="41" fill="#e5e6e8"/>
<rect x="1154.50" y="547" width="6.8" height="41" fill="#e5e6e8"/>
<rect x="1163.00" y="547" width="6.8" height="41" fill="#e5e6e8"/>
<rect x="1171.50" y="547" width="6.8" height="41" fill="#e5e6e8"/>
<rect x="1180.00" y="547" width="6.8" height="41" fill="#e5e6e8"/>
<rect x="1188.50" y="547" width="6.8" height="41" fill="#e5e6e8"/>
<rect x="1197.00" y="547" width="6.8" height="41" fill="#e5e6e8"/>
<rect x="1205.50" y="547" width="6.8" height="41" fill="#e5e6e8"/>
<rect x="1214.00" y="547" width="6.8" height="41" fill="#e5e6e8"/>
<rect x="1222.50" y="547" width="6.8" height="41" fill="#e5e6e8"/>
<rect x="1231.00" y="547" width="6.8" height="41" fill="#e5e6e8"/>
<rect x="1239.50" y="547" width="6.8" height="41" fill="#e5e6e8"/>
<rect x="1248.00" y="547" width="6.8" height="41" fill="#e5e6e8"/>
<rect x="1256.50" y="547" width="6.8" height="41" fill="#e5e6e8"/>
<rect x="1265.00" y="547" width="6.8" height="41" fill="#e5e6e8"/>
<rect x="1273.50" y="547" width="6.8" height="41" fill="#e5e6e8"/>
<rect x="1282.00" y="547" width="6.8" height="41" fill="#e5e6e8"/>
<rect x="1290.50" y="547" width="6.8" height="41" fill="#e5e6e8"/>
<rect x="1299.00" y="547" width="6.8" height="41" fill="#e5e6e8"/>
<rect x="1307.50" y="547" width="6.8" height="41" fill="#e5e6e8"/>
<rect x="1316.00" y="547" width="6.8" height="41" fill="#e5e6e8"/>
<rect x="1324.50" y="547" width="6.8" height="41" fill="#e5e6e8"/>
<rect x="1333.00" y="547" width="6.8" height="41" fill="#e5e6e8"/>
<rect x="1341.50" y="547" width="6.8" height="41" fill="#e5e6e8"/>
<rect x="1350.00" y="547" width="6.8" height="41" fill="#e5e6e8"/>
<rect x="1358.50" y="547" width="6.8" height="41" fill="#e5e6e8"/>
<rect x="1367.00" y="547" width="6.8" height="41" fill="#e5e6e8"/>
<rect x="1375.50" y="547" width="6.8" height="41" fill="#e5e6e8"/>
<rect x="566.4" y="586" width="1.2" height="4" fill="#b8babd"/>
<text x="567" y="599.8" font-size="8" fill="#a4a7ab" text-anchor="middle">00h</text>
<rect x="600.4" y="586" width="1.2" height="4" fill="#b8babd"/>
<text x="601" y="599.8" font-size="8" fill="#a4a7ab" text-anchor="middle">1h</text>
<rect x="634.4" y="586" width="1.2" height="4" fill="#b8babd"/>
<text x="635" y="599.8" font-size="8" fill="#a4a7ab" text-anchor="middle">2h</text>
<rect x="668.4" y="586" width="1.2" height="4" fill="#b8babd"/>
<text x="669" y="599.8" font-size="8" fill="#a4a7ab" text-anchor="middle">3h</text>
<rect x="702.4" y="586" width="1.2" height="4" fill="#b8babd"/>
<text x="703" y="599.8" font-size="8" fill="#a4a7ab" text-anchor="middle">4h</text>
<rect x="736.4" y="586" width="1.2" height="4" fill="#b8babd"/>
<text x="737" y="599.8" font-size="8" fill="#a4a7ab" text-anchor="middle">5h</text>
<rect x="770.4" y="586" width="1.2" height="4" fill="#b8babd"/>
<text x="771" y="599.8" font-size="8" fill="#a4a7ab" text-anchor="middle">6h</text>
<rect x="804.4" y="586" width="1.2" height="4" fill="#b8babd"/>
<text x="805" y="599.8" font-size="8" fill="#a4a7ab" text-anchor="middle">7h</text>
<rect x="838.4" y="586" width="1.2" height="4" fill="#b8babd"/>
<text x="839" y="599.8" font-size="8" fill="#a4a7ab" text-anchor="middle">8h</text>
<rect x="872.4" y="586" width="1.2" height="4" fill="#b8babd"/>
<text x="873" y="599.8" font-size="8" fill="#a4a7ab" text-anchor="middle">9h</text>
<rect x="906.4" y="586" width="1.2" height="4" fill="#b8babd"/>
<text x="907" y="599.8" font-size="8" fill="#a4a7ab" text-anchor="middle">10h</text>
<rect x="940.4" y="586" width="1.2" height="4" fill="#b8babd"/>
<text x="941" y="599.8" font-size="8" fill="#a4a7ab" text-anchor="middle">11h</text>
<rect x="974.4" y="586" width="1.2" height="4" fill="#b8babd"/>
<text x="975" y="599.8" font-size="8" fill="#a4a7ab" text-anchor="middle">12h</text>
<rect x="1008.4" y="586" width="1.2" height="4" fill="#b8babd"/>
<text x="1009" y="599.8" font-size="8" fill="#a4a7ab" text-anchor="middle">13h</text>
<rect x="1042.4" y="586" width="1.2" height="4" fill="#b8babd"/>
<text x="1043" y="599.8" font-size="8" fill="#a4a7ab" text-anchor="middle">14h</text>
<rect x="1076.4" y="586" width="1.2" height="4" fill="#b8babd"/>
<text x="1077" y="599.8" font-size="8" fill="#a4a7ab" text-anchor="middle">15h</text>
<rect x="1110.4" y="586" width="1.2" height="4" fill="#b8babd"/>
<text x="1111" y="599.8" font-size="8" fill="#a4a7ab" text-anchor="middle">16h</text>
<rect x="1144.4" y="586" width="1.2" height="4" fill="#b8babd"/>
<text x="1145" y="599.8" font-size="8" fill="#a4a7ab" text-anchor="middle">17h</text>
<rect x="1178.4" y="586" width="1.2" height="4" fill="#b8babd"/>
<text x="1179" y="599.8" font-size="8" fill="#a4a7ab" text-anchor="middle">18h</text>
<rect x="1212.4" y="586" width="1.2" height="4" fill="#b8babd"/>
<text x="1213" y="599.8" font-size="8" fill="#a4a7ab" text-anchor="middle">19h</text>
<rect x="1246.4" y="586" width="1.2" height="4" fill="#b8babd"/>
<text x="1247" y="599.8" font-size="8" fill="#a4a7ab" text-anchor="middle">20h</text>
<rect x="1280.4" y="586" width="1.2" height="4" fill="#b8babd"/>
<text x="1281" y="599.8" font-size="8" fill="#a4a7ab" text-anchor="middle">21h</text>
<rect x="1314.4" y="586" width="1.2" height="4" fill="#b8babd"/>
<text x="1315" y="599.8" font-size="8" fill="#a4a7ab" text-anchor="middle">22h</text>
<rect x="1348.4" y="586" width="1.2" height="4" fill="#b8babd"/>
<text x="1349" y="599.8" font-size="8" fill="#a4a7ab" text-anchor="middle">23h</text>
<rect x="1382.4" y="586" width="1.2" height="4" fill="#b8babd"/>
<text x="1383" y="599.8" font-size="8" fill="#a4a7ab" text-anchor="middle">24h</text>
<rect x="797.3" y="620.2" width="40.9" height="6.8" fill="#e5e6e8"/>
<rect x="838.0999999999999" y="620.2" width="40.9" height="6.8" fill="#c0190b"/>
<rect x="878.9" y="620.2" width="40.9" height="6.8" fill="#d7705f"/>
<rect x="919.6999999999999" y="620.2" width="40.9" height="6.8" fill="#e9aa14"/>
<rect x="960.5" y="620.2" width="40.9" height="6.8" fill="#45912e"/>
<rect x="1001.3" y="620.2" width="40.9" height="6.8" fill="#3d6a30"/>
<rect x="1042.1" y="620.2" width="40.9" height="6.8" fill="#4a8cf0"/>
<clipPath id="fc"><rect x="48" y="30" width="1366" height="768"/></clipPath>
<g clip-path="url(#fc)">
<rect x="478" y="656" width="920" height="150" fill="#ffffff" rx="4"/>
</g>
<text x="493.7" y="680.1" font-size="11.5" fill="#3d4f63" stroke="#3d4f63" stroke-width="0.35" textLength="95.7" lengthAdjust="spacingAndGlyphs">Últimas Inspeções</text>
<text x="493.7" y="714.2" font-size="11.5" fill="#8f959c" stroke="#8f959c" stroke-width="0.35" textLength="41" lengthAdjust="spacingAndGlyphs">Detalhe</text>
<path d="M562 706.6 L569 706.6 L566.4 710.2 L566.4 714.8 L564.6 714.8 L564.6 710.2 Z" stroke="#8f959c" stroke-width="0.4" fill="#8f959c"/>
<text x="571.3" y="714.2" font-size="11.5" fill="#8f959c" stroke="#8f959c" stroke-width="0.35" textLength="38.1" lengthAdjust="spacingAndGlyphs">Análise</text>
<path d="M791 706.6 L798 706.6 L795.4 710.2 L795.4 714.8 L793.6 714.8 L793.6 710.2 Z" stroke="#8f959c" stroke-width="0.4" fill="#8f959c"/>
<text x="801" y="714.2" font-size="11.5" fill="#8f959c" stroke="#8f959c" stroke-width="0.35" textLength="86.6" lengthAdjust="spacingAndGlyphs">Código inspeção</text>
<path d="M913.1 706.6 L920.1 706.6 L917.5 710.2 L917.5 714.8 L915.7 714.8 L915.7 710.2 Z" stroke="#8f959c" stroke-width="0.4" fill="#8f959c"/>
<text x="922.6" y="714.2" font-size="11.5" fill="#8f959c" stroke="#8f959c" stroke-width="0.35" textLength="42.1" lengthAdjust="spacingAndGlyphs">Produto</text>
<path d="M1119.2 706.6 L1126.2 706.6 L1123.6000000000001 710.2 L1123.6000000000001 714.8 L1121.8 714.8 L1121.8 710.2 Z" stroke="#8f959c" stroke-width="0.4" fill="#8f959c"/>
<text x="1128.4" y="714.2" font-size="11.5" fill="#8f959c" stroke="#8f959c" stroke-width="0.35" textLength="121.1" lengthAdjust="spacingAndGlyphs">Campos identificativos</text>
<text x="1332.1" y="714.2" font-size="11.5" fill="#8f959c" stroke="#8f959c" stroke-width="0.35" textLength="24.6" lengthAdjust="spacingAndGlyphs">Data</text>
<rect x="478" y="729" width="920" height="2" fill="#eef0f2"/>
<rect x="478" y="763" width="920" height="1" fill="#eef0f2"/>
<rect x="478" y="796.5" width="920" height="1" fill="#eef0f2"/>
<circle cx="513.2" cy="746.6999999999999" r="3.3" fill="none" stroke="#9a9ea3" stroke-width="1"/>
<path d="M515.6 749.0999999999999 L518.2 751.9" stroke="#9a9ea3" stroke-width="1.1" fill="none"/>
<text x="552.3" y="751.3" font-size="11" fill="#3f4347" textLength="28.7" lengthAdjust="spacingAndGlyphs">L02AC</text>
<rect x="791" y="737.0999999999999" width="108" height="20" fill="#f7d5d6" rx="10"/>
<text x="845" y="751.3" font-size="11" fill="#7e8589" text-anchor="middle" textLength="71" lengthAdjust="spacingAndGlyphs">L02AC_0.00009</text>
<text x="913.1" y="751.3" font-size="11" fill="#3f4347" textLength="167.6" lengthAdjust="spacingAndGlyphs">2 MINIATURA COLLECTION RT + 10Y</text>
<text x="1119.2" y="751.3" font-size="11" fill="#3f4347" textLength="139" lengthAdjust="spacingAndGlyphs">ID: 2421 / Qtd. Garrafas: 2421</text>
<text x="1332.1" y="751.3" font-size="11" fill="#3f4347" textLength="35.7" lengthAdjust="spacingAndGlyphs">Há 84 d</text>
<circle cx="513.2" cy="779.6999999999999" r="3.3" fill="none" stroke="#9a9ea3" stroke-width="1"/>
<path d="M515.6 782.0999999999999 L518.2 784.9" stroke="#9a9ea3" stroke-width="1.1" fill="none"/>
<text x="552.3" y="784.3" font-size="11" fill="#3f4347" textLength="116.5" lengthAdjust="spacingAndGlyphs">Análise Dimensional N=1</text>
<rect x="791" y="770.0999999999999" width="108" height="20" fill="#f7d5d6" rx="10"/>
<text x="845" y="784.3" font-size="11" fill="#7e8589" text-anchor="middle" textLength="69" lengthAdjust="spacingAndGlyphs">ADN1_0.00117</text>
<text x="913.1" y="784.3" font-size="11" fill="#3f4347" textLength="47.3" lengthAdjust="spacingAndGlyphs">Produto A</text>
<text x="1119.2" y="784.3" font-size="11" fill="#3f4347" textLength="139" lengthAdjust="spacingAndGlyphs">ID: 2421 / Qtd. Garrafas: 2421</text>
<text x="1332.1" y="784.3" font-size="11" fill="#3f4347" textLength="41.3" lengthAdjust="spacingAndGlyphs">Há 106 d</text>
</svg>
</body></html>
